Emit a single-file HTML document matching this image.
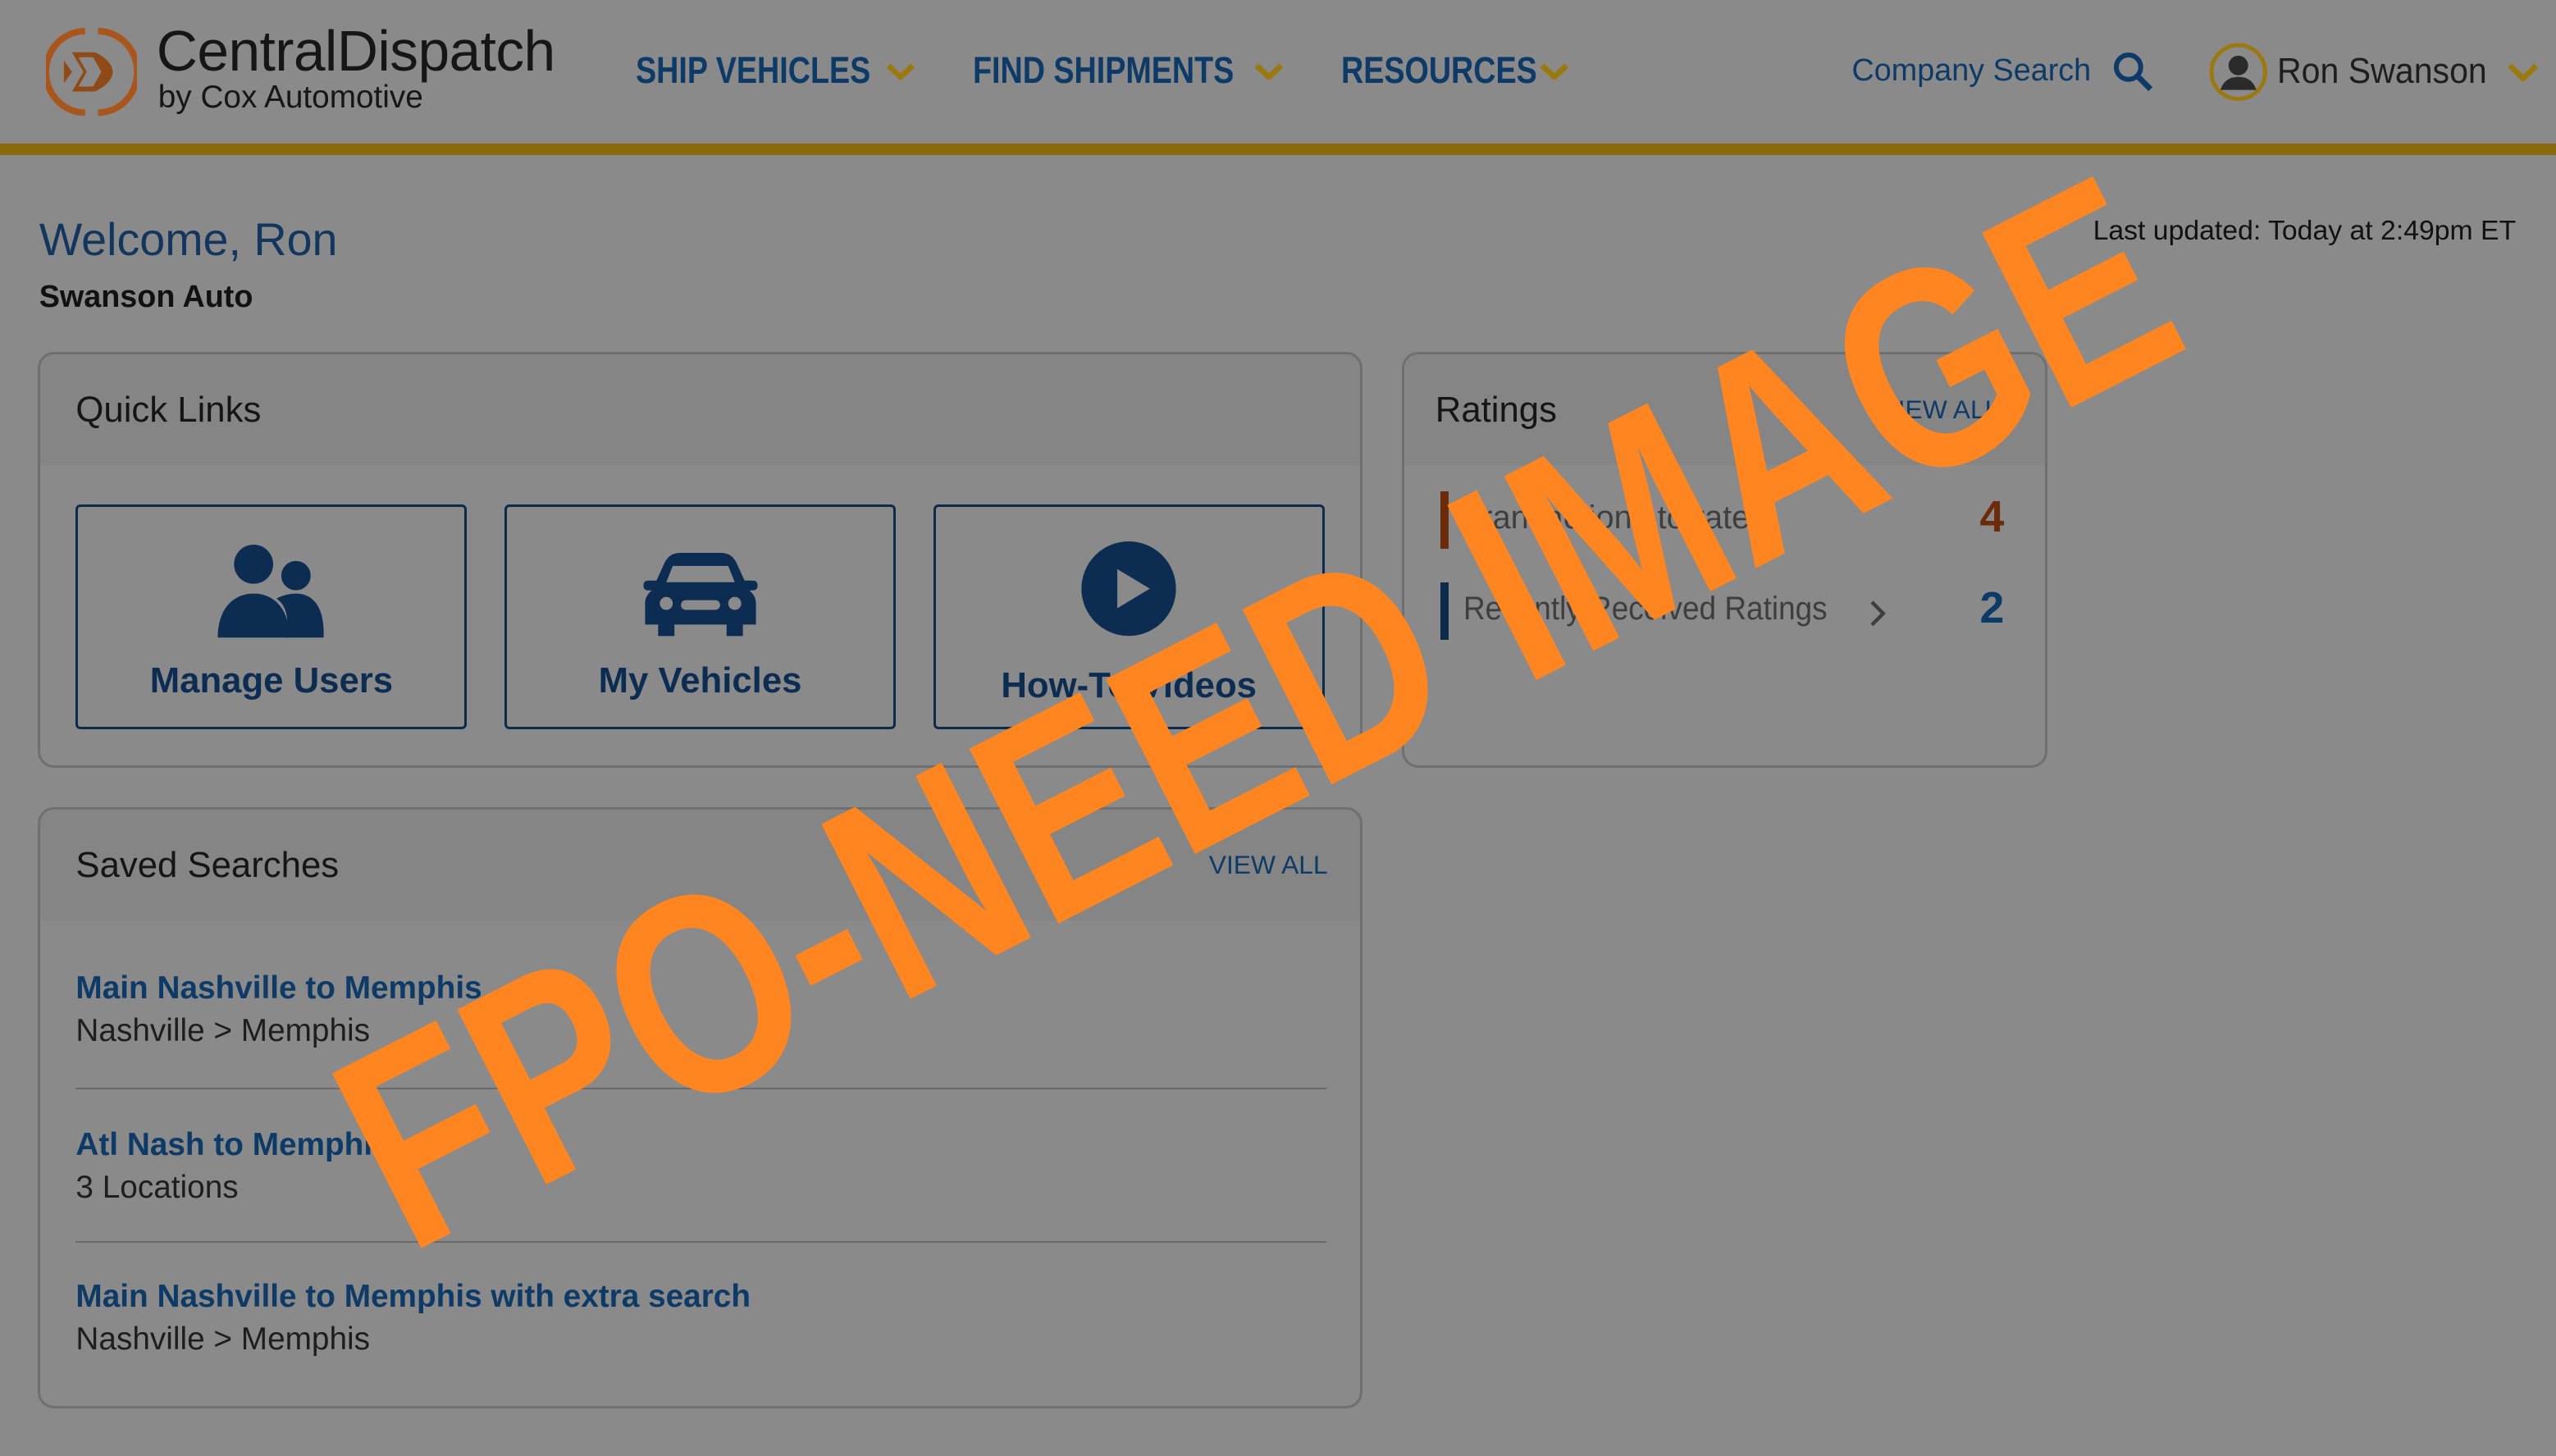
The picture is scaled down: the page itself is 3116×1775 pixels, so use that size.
<!DOCTYPE html>
<html><head><meta charset="utf-8"><style>
html{zoom:1.98724}
body{margin:0;width:1568px;height:893px;background:#8a8a8a;font-family:"Liberation Sans",sans-serif;position:relative;overflow:hidden;color:#1e1e1e}
.abs{position:absolute}
.nav{font-weight:bold;font-size:23px;color:#0d3a66;top:30px;transform:scaleX(0.825);transform-origin:0 0;white-space:nowrap}
.ch{position:absolute;top:38px}
.card{position:absolute;border:2px solid #6f6f6f;border-radius:10px;overflow:hidden;background:#8a8a8a}
.card .hd{height:68px;background:#858585;font-size:22px;line-height:68px;padding-left:22px;color:#151515}
.btn{position:absolute;top:92px;width:237px;height:135px;border:2px solid #0c2a4a;border-radius:3px;text-align:center;font-weight:bold;font-size:22px;color:#0c2c52}
.btn span{position:absolute;left:0;right:0;top:94px}
.btn svg{position:absolute;left:50%;transform:translateX(-50%)}
.t{font-weight:bold;font-size:19.5px;color:#0d3a66;position:absolute;left:22px}
.s{font-size:19.5px;color:#1e1e1e;position:absolute;left:22px}
.hr{position:absolute;left:22px;width:767px;height:1px;background:#6a6a6a}
</style></head><body>
<svg class="abs" style="left:28px;top:15px" width="56" height="58" viewBox="0 0 56 58">
<path d="M24 4 A24 25 0 0 0 24 54" fill="none" stroke="#a8561c" stroke-width="4"/>
<path d="M32 4 A24 25 0 0 1 32 54" fill="none" stroke="#a8561c" stroke-width="4"/>
<path d="M16 17 h14 c7 3 11 8 11 12 c0 4-4 9-11 12 h-14 l7-12z" fill="#8f4a15"/>
<path d="M11 22 l5 7 l-5 7z" fill="#8f4a15"/>
<path d="M20 20 h9 l5 9 l-5 9 h-9 l5-9z" fill="#8a8a8a"/>
</svg>
<div class="abs" style="left:96px;top:11px;font-size:35px;color:#161616;letter-spacing:-0.3px">CentralDispatch</div>
<div class="abs" style="left:97px;top:49px;font-size:19.5px;color:#161616">by Cox Automotive</div>
<div class="abs nav" style="left:390px">SHIP VEHICLES</div>
<svg class="abs ch" style="left:543px" width="19" height="11"><path d="M2 2l7.5 7 7.5-7" stroke="#9a7a10" stroke-width="3.5" fill="none"/></svg>
<div class="abs nav" style="left:597px">FIND SHIPMENTS</div>
<svg class="abs ch" style="left:769px" width="19" height="11"><path d="M2 2l7.5 7 7.5-7" stroke="#9a7a10" stroke-width="3.5" fill="none"/></svg>
<div class="abs nav" style="left:823px">RESOURCES</div>
<svg class="abs ch" style="left:944px" width="19" height="11"><path d="M2 2l7.5 7 7.5-7" stroke="#9a7a10" stroke-width="3.5" fill="none"/></svg>
<div class="abs" style="left:1136px;top:32px;font-size:19px;color:#0d3a66">Company Search</div>
<svg class="abs" style="left:1296px;top:31px" width="26" height="26"><circle cx="10" cy="10" r="7.5" stroke="#0d3a66" stroke-width="3" fill="none"/><path d="M15.5 15.5l8 8" stroke="#0d3a66" stroke-width="3.5"/></svg>
<svg class="abs" style="left:1354px;top:25px" width="38" height="38"><circle cx="19" cy="19" r="16.5" stroke="#9a7a10" stroke-width="2.5" fill="#8a8a8a"/><circle cx="19" cy="15" r="6" fill="#2a2a2a"/><path d="M8 30c2-6 6-8 11-8s9 2 11 8z" fill="#2a2a2a"/></svg>
<div class="abs" style="left:1397px;top:31px;font-size:22px;color:#1e1e1e;transform:scaleX(0.94);transform-origin:0 0">Ron Swanson</div>
<svg class="abs" style="left:1538px;top:38px" width="20" height="12"><path d="M2 2l8 8 8-8" stroke="#9a7a10" stroke-width="3.5" fill="none"/></svg>
<div class="abs" style="left:0;top:88px;width:1568px;height:7px;background:#8a6a0c"></div>

<div class="abs" style="left:24px;top:131px;font-size:28px;color:#13365e">Welcome, Ron</div>
<div class="abs" style="left:24px;top:171px;font-size:19px;font-weight:bold;color:#111">Swanson Auto</div>
<div class="abs" style="left:1284px;top:132px;font-size:17px;color:#111">Last updated: Today at 2:49pm ET</div>

<div class="card" style="left:23px;top:216px;width:810px;height:252px">
<div class="hd">Quick Links</div>
<div class="btn" style="left:22px"><svg style="top:22px" width="66" height="60" viewBox="0 0 66 60"><circle cx="22" cy="13" r="12" fill="#0c2c52"/><path d="M0 58c0-17 9-27 22-27s22 10 22 27z" fill="#0c2c52"/><circle cx="48" cy="20" r="10" fill="#0c2c52" stroke="#8a8a8a" stroke-width="2"/><path d="M42 58c2-12 0-20-6-24 4-2 8-3 12-3 11 0 17 9 17 24v3z" fill="#0c2c52"/></svg><span>Manage Users</span></div>
<div class="btn" style="left:285px"><svg style="top:28px" width="72" height="52" viewBox="0 0 72 52"><path d="M14 6c2-4 5-6 10-6h24c5 0 8 2 10 6l5 11h5c2 0 3 1 3 3s-1 3-3 3h-2c2 2 4 4 4 8v13h-8v7h-10v-7h-32v7h-10v-7h-8v-13c0-4 2-6 4-8h-2c-2 0-3-1-3-3s1-3 3-3h5z" fill="#0c2c52"/><path d="M19 8h34l4 10h-42z" fill="#8a8a8a"/><circle cx="15" cy="31" r="4" fill="#8a8a8a"/><circle cx="57" cy="31" r="4" fill="#8a8a8a"/><rect x="24" y="29" width="24" height="6" rx="3" fill="#8a8a8a"/></svg><span>My Vehicles</span></div>
<div class="btn" style="left:548px"><svg style="top:20px" width="60" height="60"><circle cx="30" cy="30" r="29" fill="#0c2c52"/><path d="M23 18v24l20-12z" fill="#8a8a8a"/></svg><span style="top:97px">How-To Videos</span></div>
</div>

<div class="card" style="left:860px;top:216px;width:393px;height:252px">
<div class="hd" style="padding-left:19px">Ratings<span style="position:absolute;right:28px;font-size:16px;color:#0d3a66">VIEW ALL</span></div>
<div class="abs" style="left:22px;top:84px;width:5px;height:35px;background:#6b2a0a"></div>
<div class="abs" style="left:36px;top:89px;font-size:20px;color:#3e3e3e">Transactions to rate ›</div>
<div class="abs" style="left:353px;top:84px;font-size:27px;font-weight:bold;color:#6b2a0a">4</div>
<div class="abs" style="left:22px;top:140px;width:5px;height:35px;background:#0c2a4a"></div>
<div class="abs" style="left:36px;top:145px;font-size:20px;color:#3e3e3e;transform:scaleX(0.93);transform-origin:0 0">Recently Received Ratings</div>
<svg class="abs" style="left:284px;top:150px" width="12" height="18"><path d="M3 2l7 7-7 7" stroke="#3e3e3e" stroke-width="2.2" fill="none"/></svg>
<div class="abs" style="left:353px;top:140px;font-size:27px;font-weight:bold;color:#0d3a66">2</div>
</div>

<div class="card" style="left:23px;top:495px;width:810px;height:366px">
<div class="hd">Saved Searches<span style="position:absolute;right:20px;font-size:16px;color:#0d3a66">VIEW ALL</span></div>
<div class="t" style="top:99px">Main Nashville to Memphis</div>
<div class="s" style="top:125px">Nashville &gt; Memphis</div>
<div class="hr" style="top:171px"></div>
<div class="t" style="top:195px">Atl Nash to Memphis</div>
<div class="s" style="top:221px">3 Locations</div>
<div class="hr" style="top:265px"></div>
<div class="t" style="top:288px">Main Nashville to Memphis with extra search</div>
<div class="s" style="top:314px">Nashville &gt; Memphis</div>
</div>

<svg class="abs" style="left:0;top:0" width="1568" height="893">
<text x="0" y="0" transform="translate(250,770) rotate(-27)" font-family="Liberation Sans, sans-serif" font-weight="bold" font-size="175" fill="#ff8520" textLength="1230" lengthAdjust="spacingAndGlyphs">FPO-NEED IMAGE</text>
</svg>
</body></html>
